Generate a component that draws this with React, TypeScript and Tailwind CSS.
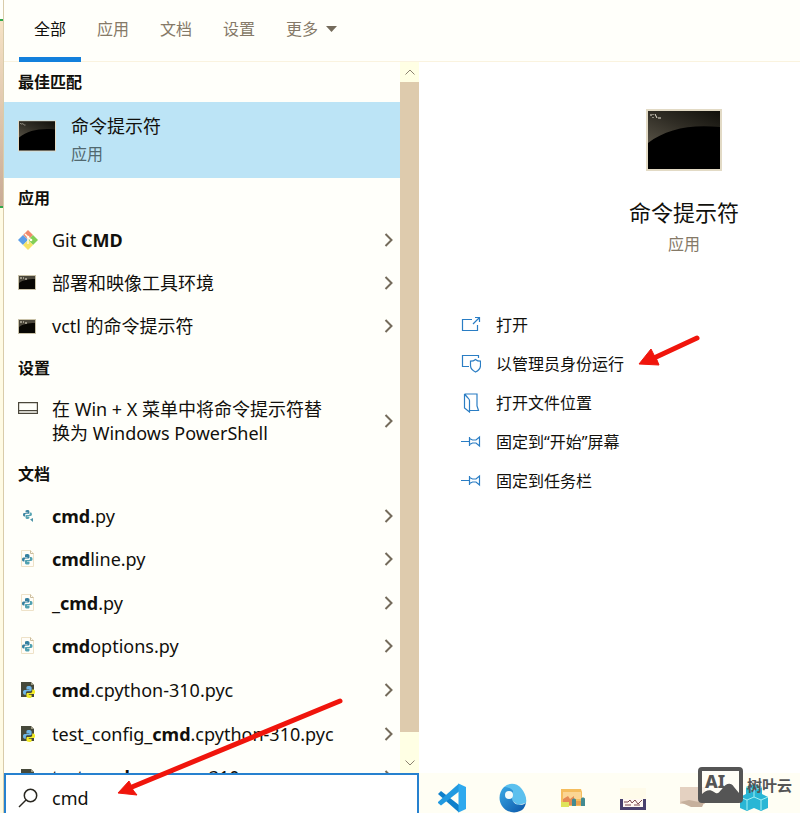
import React from 'react';

interface ResultRow {
  label: React.ReactNode;
  icon: React.FC;
}

const SmallConsole = () => (
  <svg width="18" height="15" viewBox="0 0 18 15">
    <rect width="18" height="15" fill="#c9c2a8" />
    <rect x="1" y="1" width="16" height="13" fill="#080703" />
    <path d="M1 1h16v3C10 4 5 5 1 8z" fill="#4b473b" />
    <path d="M2 3h2M5 3h1M7 4h2" stroke="#eee8d4" />
  </svg>
);

const Console: React.FC<{ className: string }> = ({ className }) => (
  <svg className={className} viewBox="0 0 76 62">
    <defs>
      <linearGradient id="shine" x1="0" y1="1" x2="1" y2="0">
        <stop offset="0" stopColor="#555044" />
        <stop offset="0.5" stopColor="#302d25" />
        <stop offset="1" stopColor="#11100b" />
      </linearGradient>
    </defs>
    <rect width="76" height="62" fill="#e2dac5" />
    <rect x="2" y="2" width="72" height="58" fill="#000" />
    <path d="M2 2h72v16C44 15 20 20 2 34z" fill="url(#shine)" />
    <path d="M4 6h2M7 5v1M7 8v1M9 5l2 4M12 9h3" stroke="#e8e3d5" fill="none" />
  </svg>
);

const GitIcon = () => (
  <svg width="20" height="20" viewBox="0 0 20 20">
    <path d="M10 0l5 5-5 5-5-5z" fill="#f18a6d" />
    <path d="M5 5l5 5-5 5-5-5z" fill="#5b9ee8" />
    <path d="M15 5l5 5-5 5-5-5z" fill="#83cf57" />
    <path d="M10 10l5 5-5 5-5-5z" fill="#f6e366" />
    <path d="M7 4l6 6M10 7v7" stroke="#fffdf0" strokeWidth="1.4" />
    <circle cx="10" cy="7" r="1.3" fill="#fffdf0" />
    <circle cx="13" cy="10" r="1.3" fill="#fffdf0" />
  </svg>
);

const WindowIcon = () => (
  <svg width="20" height="20" viewBox="0 0 20 20" fill="none" stroke="#4b473b" strokeWidth="1.2">
    <path d="M.6 4.6h18.8v10.8H.6zM.6 12.6h18.8" />
  </svg>
);

const Snake: React.FC<{ top: string; bottom: string }> = ({ top, bottom }) => (
  <>
    <path
      d="M5 0C2.800 0 3 1 3 1.600V3h2.500v.5H1.500C.5 3.500 0 4.300 0 5.500S.6 7.500 1.500 7.500H2.500V6C2.500 5 3 4.500 4 4.500H6.500C7.300 4.500 7.500 4 7.500 3.300V1.500C7.500.5 6.500 0 5 0z"
      fill={top}
    />
    <path
      d="M5.500 10.500C7.700 10.500 7.500 9.500 7.500 8.900V7.500H5V7h4c1 0 1.500-.8 1.500-2S9.900 3 9 3H8v1.500C8 5.500 7.500 6 6.500 6H4C3.200 6 3 6.500 3 7.200V9c0 1 1 1.500 2.500 1.500z"
      fill={bottom}
    />
  </>
);

const PyShortcutIcon = () => (
  <svg width="20" height="20" viewBox="0 0 20 20">
    <g transform="translate(5 4) scale(.85)">
      <Snake top="#3f86a2" bottom="#58a5b3" />
    </g>
    <path d="M12 13.500l3-1.500v4z" fill="#4f95a8" />
  </svg>
);

const PyIcon = () => (
  <svg width="20" height="20" viewBox="0 0 20 20">
    <path d="M3.500 1.500h9l3 3v13h-12z" fill="#fffdf7" stroke="#eee2c8" />
    <path d="M12.500 1.500v3h3" fill="none" stroke="#cbbd9d" />
    <g transform="translate(4 5)">
      <Snake top="#347f9f" bottom="#50a1b1" />
    </g>
  </svg>
);

const PycIcon = () => (
  <svg width="20" height="20" viewBox="0 0 20 20">
    <path d="M3 2h10l3 3v12H3z" fill="#46493a" />
    <path d="M13 2v3h3z" fill="#9b9a83" />
    <g transform="translate(5 6) scale(1.150)">
      <Snake top="#6eb6e8" bottom="#f4ed28" />
    </g>
  </svg>
);

const apps: ResultRow[] = [
  { label: <>Git <b>CMD</b></>, icon: GitIcon },
  { label: '部署和映像工具环境', icon: SmallConsole },
  { label: 'vctl 的命令提示符', icon: SmallConsole },
];

const documents: ResultRow[] = [
  { label: <><b>cmd</b>.py</>, icon: PyShortcutIcon },
  { label: <><b>cmd</b>line.py</>, icon: PyIcon },
  { label: <>_<b>cmd</b>.py</>, icon: PyIcon },
  { label: <><b>cmd</b>options.py</>, icon: PyIcon },
  { label: <><b>cmd</b>.cpython-310.pyc</>, icon: PycIcon },
  { label: <>test_config_<b>cmd</b>.cpython-310.pyc</>, icon: PycIcon },
  { label: <>test_<b>cmd</b>.cpython-310.pyc</>, icon: PycIcon },
];

const tabs = ['全部', '应用', '文档', '设置'];

const OpenIcon = () => <path d="M11 4.500H1.500v11h15V10M12 9l6.500-6.500M14 2.500h4.500V7" />;
const AdminIcon = () => (
  <>
    <path d="M8 12.500H1.500v-11h16V4" />
    <path d="M14.500 5.500c1.500 1.300 3 1.700 5 1.700v4.300c0 3-2 5-5 6.500-3-1.500-5-3.500-5-6.500V7.200c2 0 3.500-.4 5-1.700z" />
  </>
);
const FolderIcon = () => (
  <path d="M3.500 1h12.500v12l1.500 4.500H8.500M3.500 1v14l5 4V7.500c0-1.500-1-2-2-3L3.500 1" />
);
const PinIcon = () => (
  <path d="M0 9.500h8M8.500 5v9M8.500 6.500l3 1.500h3.500l3.500-3v9l-3.500-3h-3.500l-3 1.500" />
);

const actions = [
  { label: '打开', icon: OpenIcon },
  { label: '以管理员身份运行', icon: AdminIcon },
  { label: '打开文件位置', icon: FolderIcon },
  { label: '固定到“开始”屏幕', icon: PinIcon },
  { label: '固定到任务栏', icon: PinIcon },
];

const Chevron = () => (
  <svg className="shrink-0" width="10" height="16" viewBox="0 0 10 16" fill="none" stroke="#746b5b" strokeWidth="2">
    <path d="M1.500 2l6 6-6 6" />
  </svg>
);

const GroupTitle: React.FC<{ children: React.ReactNode }> = ({ children }) => (
  <h2 className="flex h-10 shrink-0 items-center pl-[14px] text-base font-bold">{children}</h2>
);

const Row: React.FC<ResultRow> = ({ label, icon: Icon }) => (
  <button className="flex w-full items-center pr-[6px] pl-[14px] text-left text-lg leading-6 whitespace-nowrap">
    <span className="flex w-[34px] shrink-0">
      <Icon />
    </span>
    <span className="min-w-0 flex-1">{label}</span>
    <Chevron />
  </button>
);

const Taskbar = () => (
  <nav className="flex h-10 shrink-0 items-center gap-8 bg-[#fffef4] pt-[10px] pl-[18px]">
    <button aria-label="Visual Studio Code">
      <svg width="30" height="30" viewBox="0 0 30 30">
        <path d="M1 11l3-3 18 14v7.500L1 11z" fill="#0f80cb" />
        <path d="M1 20l3 2.500L22 8.500V.5L1 19z" fill="#2199e0" />
        <path d="M21.500.5L29 4v22l-7.500 3.500z" fill="#2fa9ee" />
      </svg>
    </button>
    <button aria-label="Edge">
      <svg width="28" height="30" viewBox="0 0 28 30">
        <defs>
          <linearGradient id="wave" x1="0" y1="0" x2="1" y2="1">
            <stop offset="0" stopColor="#3aa9e6" />
            <stop offset="1" stopColor="#0a55a8" />
          </linearGradient>
        </defs>
        <path d="M5 4C10-1 18 0 22 5c4 5 6 10 5 15l-8 2L5 12z" fill="#5cc0ee" />
        <path d="M5 4c-5 5-6 13-2 19 4 6 12 8 18 5 3-1 5-4 6-8-6 4-13 1-14-4L14 8C12 5 8 4 5 4z" fill="url(#wave)" />
        <circle cx="10" cy="12" r="4" fill="#f2fbfb" />
      </svg>
    </button>
    <button aria-label="文件资源管理器">
      <svg width="28" height="24" viewBox="0 0 28 24">
        <path d="M2 3h20l1 3v14H2z" fill="#f5bd5d" />
        <path d="M4 6h18v7H4z" fill="#fbd593" />
        <path d="M4 13l5-3 2 3 4-3v9H4z" fill="#e58a55" />
        <path d="M2 16h8v5H2z" fill="#dfe45b" />
        <path d="M13 20v-6c0-2 4-2 4 0v6zM22 20v-7c0-2 4-2 4 0v7z" fill="#438a91" />
        <path d="M17 15h5v4h-5z" fill="#e9a04f" />
      </svg>
    </button>
    <button aria-label="截图工具">
      <svg width="28" height="26" viewBox="0 0 28 26">
        <path d="M1 3h26v12H1z" fill="#fffbea" />
        <path d="M1 14h26v11H1z" fill="#48406d" />
        <path d="M4 14h20v8H4z" fill="#fff8f2" />
        <path d="M5 17h4l2-2 2 3 3-3 3 4 4-4M6 20h6M15 20h6" stroke="#7d4b51" fill="none" />
      </svg>
    </button>
    <button aria-label="设备">
      <svg width="28" height="24" viewBox="0 0 28 24">
        <path d="M1 1h25v17H1z" fill="#e4d1c1" />
        <path d="M1 16l9-2 15 3-2 4H12z" fill="#c6b09d" />
      </svg>
    </button>
    <button aria-label="存储">
      <svg width="30" height="28" viewBox="0 0 30 28">
        <path d="M7 3l8-3 8 3v7l6 3v11l-7 3-7-3-7 3-7-3V13l6-3z" fill="#29b6d5" />
        <path d="M7 3l8 3 8-3M1 13l7 3 7-3 7 3 7-3M8 16v10M22 16v10M15 6v7" stroke="#a2eff4" fill="none" />
      </svg>
    </button>
  </nav>
);

const App: React.FC = () => {
  return (
    <div
      lang="zh-CN"
      className="relative flex h-screen overflow-hidden bg-[#fffffa] font-['Noto_Sans','Noto_Sans_CJK_SC',sans-serif] text-[#11100c]"
    >
      {/* Sliver of the window behind the panel */}
      <div className="flex w-1 shrink-0 flex-col border-r border-[#d9ccaa] bg-[#fffbe4]">
        <div className="h-[21px] shrink-0 border-b-2 border-[#31a84c] bg-[#fffffa]" />
        <div className="h-[187px] shrink-0 border-b-2 border-[#31a84c] bg-linear-to-b from-[#f6e3c6] to-[#c9ab95]" />
      </div>

      <div className="flex min-w-0 flex-1 flex-col">
        <header className="flex h-[62px] shrink-0 gap-px border-b border-[#faf3df] pl-[15px]">
          {tabs.map((tab, index) => (
            <button
              key={tab}
              className={`-mb-px border-b-[5px] px-[15px] text-base ${
                index === 0 ? 'border-[#1380dc] text-[#11100c]' : 'border-transparent text-[#857967]'
              }`}
            >
              {tab}
            </button>
          ))}
          <button className="-mb-px flex items-center gap-2 border-b-[5px] border-transparent px-[15px] text-base text-[#857967]">
            更多
            <svg width="11" height="6" viewBox="0 0 11 6">
              <path d="M0 0h11L5.500 6z" fill="#746b5b" />
            </svg>
          </button>
        </header>

        <div className="flex min-h-0 flex-1">
          <section className="flex w-[415px] shrink-0 flex-col">
            <div className="flex min-h-0 flex-1">
              <div className="min-w-0 flex-1 overflow-hidden">
                <GroupTitle>最佳匹配</GroupTitle>
                <button className="flex h-[76px] w-full items-start bg-[#bce4f6] pt-[10px] pl-[14px] text-left">
                  <Console className="mt-2 mr-[15px] h-8 w-[38px]" />
                  <span className="flex flex-col">
                    <span className="text-lg leading-7">命令提示符</span>
                    <span className="text-base leading-7 text-[#51686f]">应用</span>
                  </span>
                </button>

                <GroupTitle>应用</GroupTitle>
                <div className="grid h-[130px] grid-rows-3">
                  {apps.map((row, index) => (
                    <Row key={index} {...row} />
                  ))}
                </div>

                <GroupTitle>设置</GroupTitle>
                <button className="flex h-[66px] w-full items-center pr-[6px] pl-[14px] text-left text-lg leading-6">
                  <span className="flex w-[34px] shrink-0 self-start pt-[10px]">
                    <WindowIcon />
                  </span>
                  <span className="flex-1 whitespace-nowrap">
                    在 Win + X 菜单中将命令提示符替
                    <br />
                    换为 Windows PowerShell
                  </span>
                  <Chevron />
                </button>

                <GroupTitle>文档</GroupTitle>
                <div className="grid h-[305px] grid-rows-7">
                  {documents.map((row, index) => (
                    <Row key={index} {...row} />
                  ))}
                </div>
              </div>

              <div className="flex w-[19px] shrink-0 flex-col bg-[#ffffe4]">
                <button aria-label="向上滚动" className="flex h-5 items-center justify-center">
                  <svg width="10" height="6" viewBox="0 0 10 6" fill="none" stroke="#8b8170">
                    <path d="M.5 5.500L5 1l4.500 4.500" />
                  </svg>
                </button>
                <div className="flex-1 bg-[#decbad]" />
                <div className="h-[21px]" />
                <button aria-label="向下滚动" className="flex h-5 items-center justify-center">
                  <svg width="10" height="6" viewBox="0 0 10 6" fill="none" stroke="#8b8170">
                    <path d="M.5.5L5 5 9.500.5" />
                  </svg>
                </button>
              </div>
            </div>

            <label className="flex h-10 shrink-0 items-center border-2 border-b-0 border-[#2681cf] bg-white pt-2 pl-3">
              <svg className="mr-[14px] shrink-0" width="20" height="20" viewBox="0 0 20 20" fill="none" stroke="#292720" strokeWidth="1.500">
                <circle cx="12.500" cy="7.500" r="6.200" />
                <path d="M8 12L1 19" />
              </svg>
              <input aria-label="搜索" defaultValue="cmd" className="min-w-0 flex-1 bg-transparent text-lg leading-6 outline-none" />
            </label>
          </section>

          <div className="flex min-w-0 flex-1 flex-col">
            <main className="flex-1 bg-white">
              <div className="flex flex-col items-center pt-[47px] pl-[149px]">
                <Console className="h-[62px] w-[76px]" />
                <h1 className="mt-[25px] text-[22px] leading-8">命令提示符</h1>
                <p className="mt-1 text-base leading-6 text-[#857967]">应用</p>
              </div>
              <ul className="mt-[49px] pl-[42px]">
                {actions.map(({ label, icon: Icon }) => (
                  <li key={label}>
                    <button className="flex h-[39px] items-center gap-[15px] text-base">
                      <svg width="20" height="20" viewBox="0 0 20 20" fill="none" stroke="#2a7dc4" strokeWidth="1.200">
                        <Icon />
                      </svg>
                      {label}
                    </button>
                  </li>
                ))}
              </ul>
            </main>
            <Taskbar />
          </div>
        </div>
      </div>

      {/* Hand-drawn pointers */}
      <svg className="pointer-events-none absolute top-[334px] left-[638px]" width="64" height="36" viewBox="0 0 64 36">
        <path d="M59 4L16 24" stroke="#f0150c" strokeWidth="5" strokeLinecap="round" />
        <path d="M1 30L13 15l3 6 3 5 2 5z" fill="#f0150c" stroke="#f0150c" strokeLinejoin="round" />
      </svg>
      <svg className="pointer-events-none absolute bottom-4 left-[117px]" width="230" height="102" viewBox="0 0 230 102">
        <path d="M223 6L15 92" stroke="#f0150c" strokeWidth="5" strokeLinecap="round" />
        <path d="M1 98L12 86l2 4 2 5 4 5z" fill="#f0150c" stroke="#f0150c" strokeLinejoin="round" />
      </svg>

      {/* Watermark */}
      <div className="pointer-events-none absolute right-2 bottom-[10px] flex items-center gap-1 text-[#555]">
        <svg width="45" height="36" viewBox="0 0 45 36">
          <rect x="2" y="2" width="41" height="32" rx="2" fill="#fffef7" fillOpacity="0.7" stroke="#555" strokeWidth="4" />
          <path d="M4 27c4-4 8-5 12-2s5 0 8-3c4-6 9-7 12-2l5 6v8H4z" fill="#555" />
          <text x="7" y="21" fontSize="18" fontWeight="800" fill="#555">AI</text>
        </svg>
        <span className="text-[15px] leading-5 font-bold">树叶云</span>
      </div>
    </div>
  );
};

export default App;
